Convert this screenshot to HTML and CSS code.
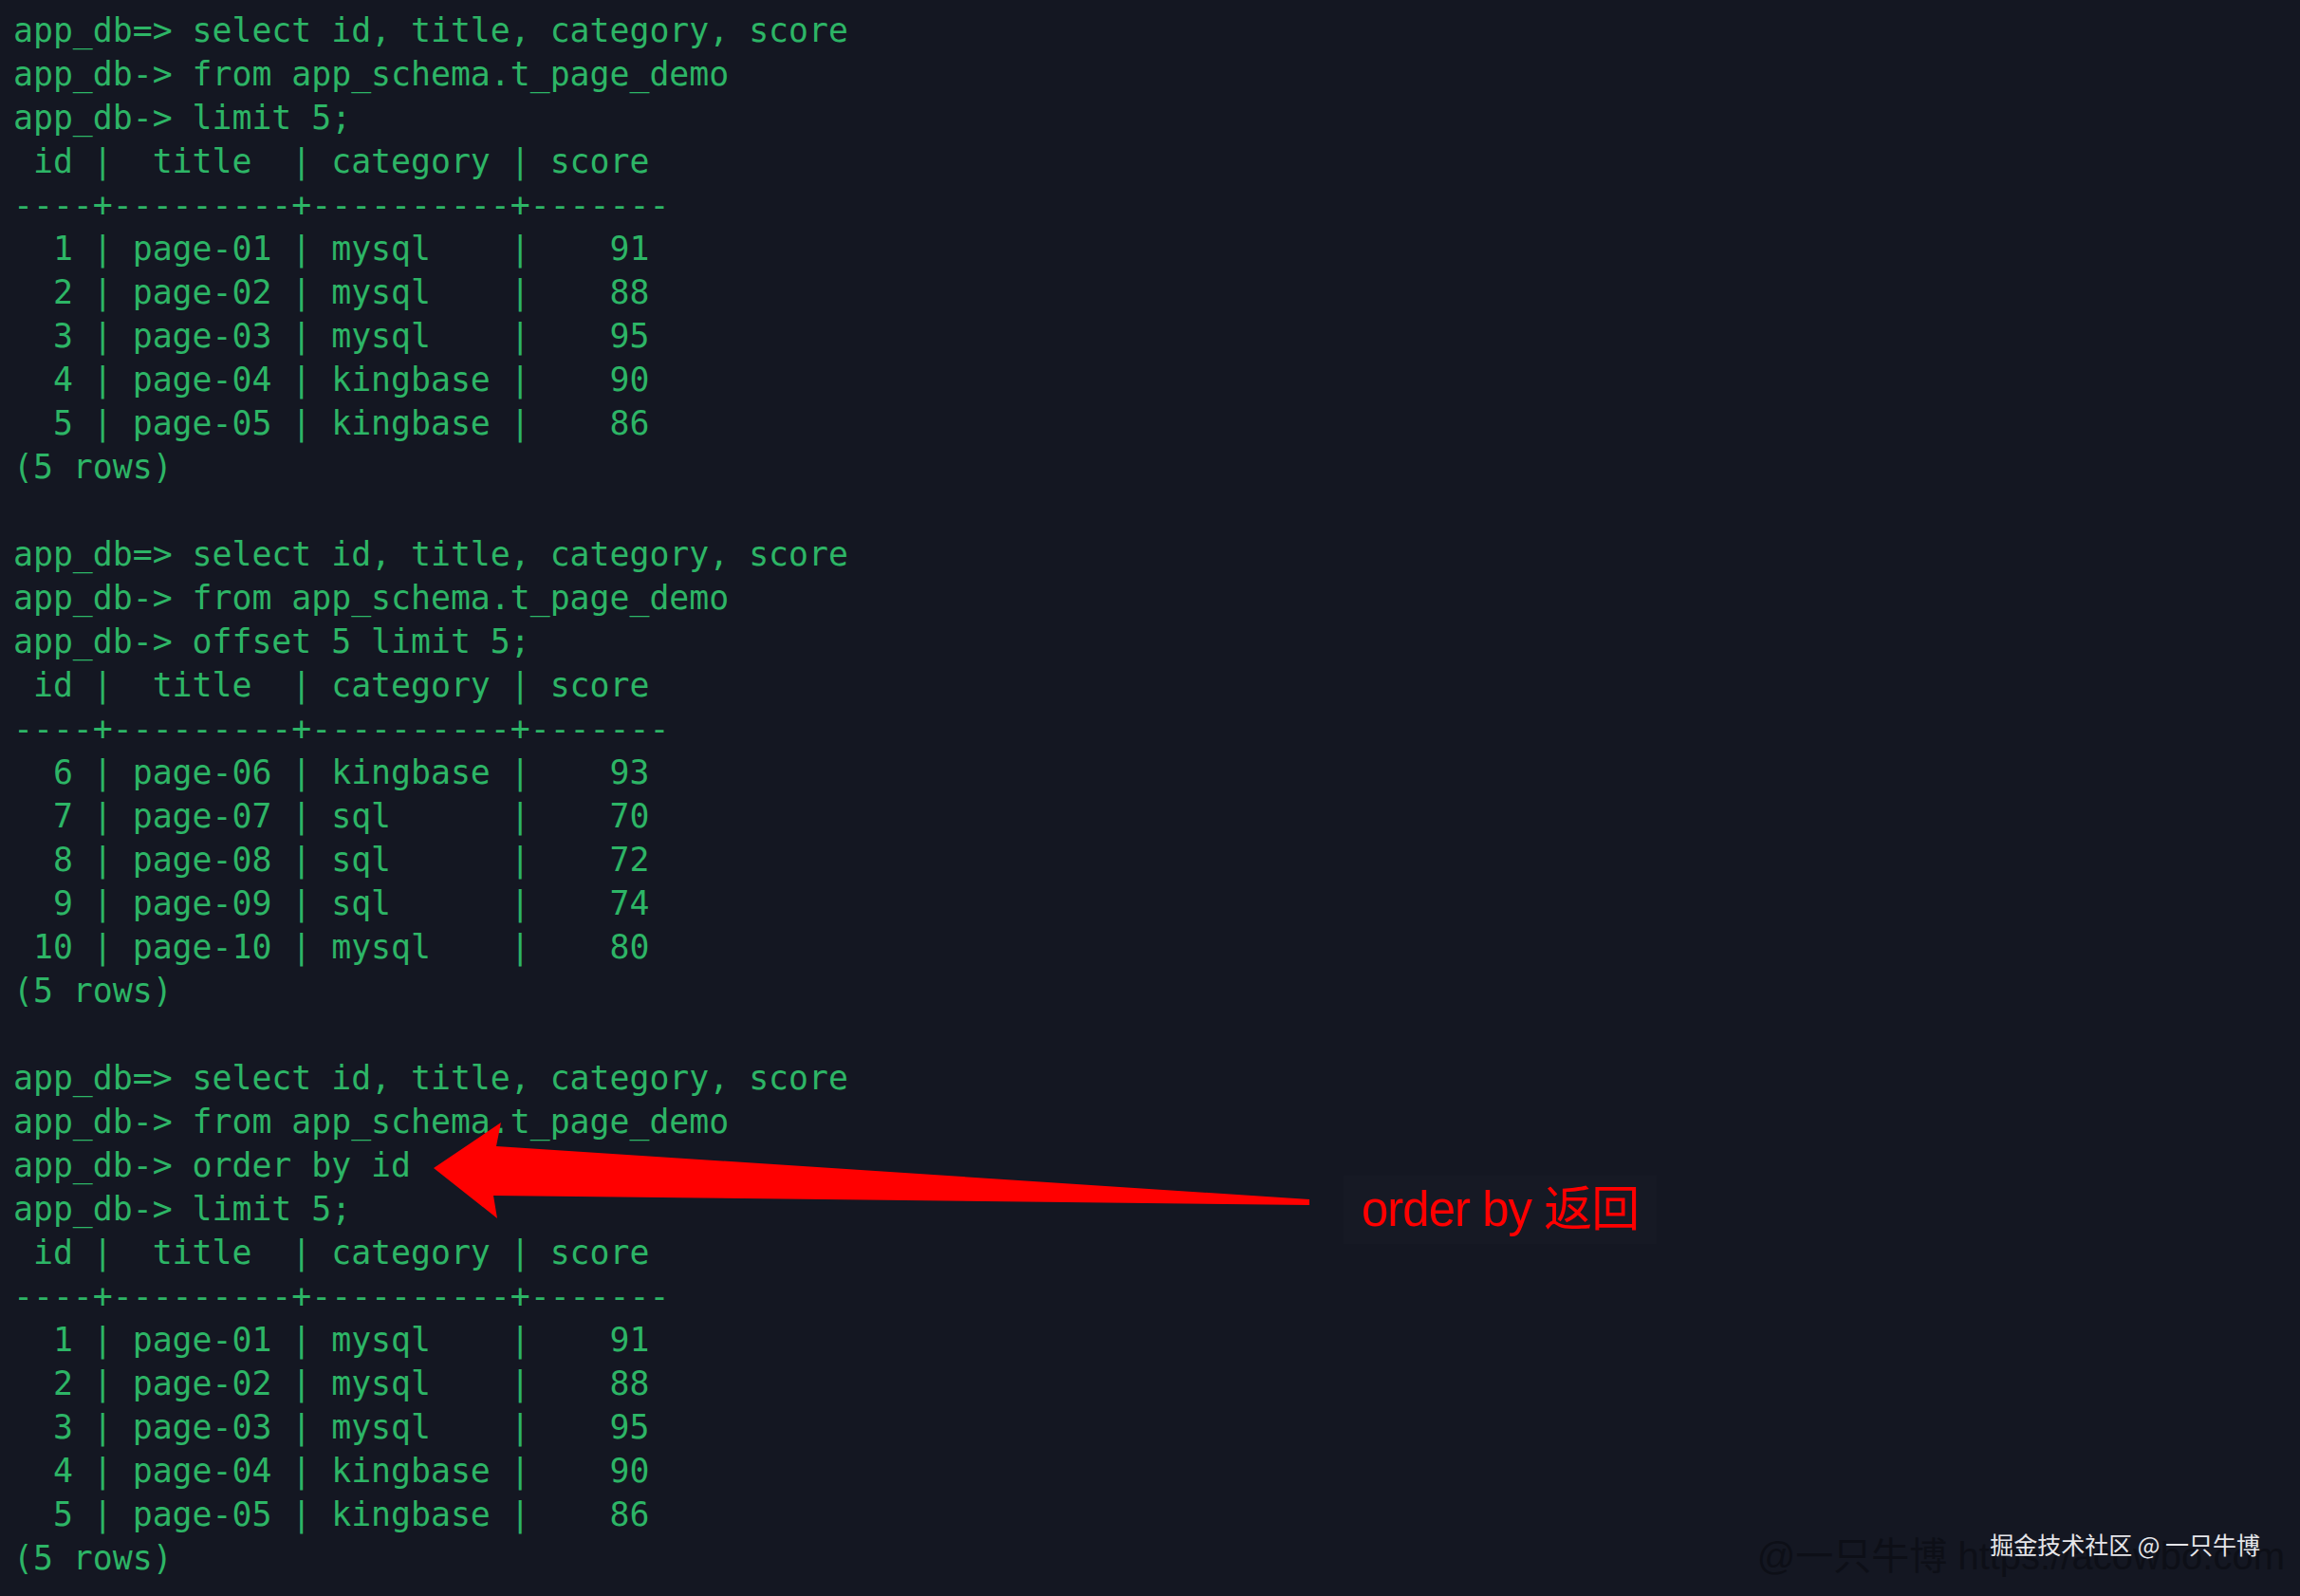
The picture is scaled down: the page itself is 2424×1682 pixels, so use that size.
FILE: index.html
```html
<!DOCTYPE html>
<html lang="zh-CN">
<head>
<meta charset="utf-8">
<title>psql</title>
<link rel="stylesheet" href="styles.css">
</head>
<body>
<main class="screen">
<pre class="term">app_db=&gt; select id, title, category, score
app_db-&gt; from app_schema.t_page_demo
app_db-&gt; limit 5;
 id |  title  | category | score
----+---------+----------+-------
  1 | page-01 | mysql    |    91
  2 | page-02 | mysql    |    88
  3 | page-03 | mysql    |    95
  4 | page-04 | kingbase |    90
  5 | page-05 | kingbase |    86
(5 rows)

app_db=&gt; select id, title, category, score
app_db-&gt; from app_schema.t_page_demo
app_db-&gt; offset 5 limit 5;
 id |  title  | category | score
----+---------+----------+-------
  6 | page-06 | kingbase |    93
  7 | page-07 | sql      |    70
  8 | page-08 | sql      |    72
  9 | page-09 | sql      |    74
 10 | page-10 | mysql    |    80
(5 rows)

app_db=&gt; select id, title, category, score
app_db-&gt; from app_schema.t_page_demo
app_db-&gt; order by id
app_db-&gt; limit 5;
 id |  title  | category | score
----+---------+----------+-------
  1 | page-01 | mysql    |    91
  2 | page-02 | mysql    |    88
  3 | page-03 | mysql    |    95
  4 | page-04 | kingbase |    90
  5 | page-05 | kingbase |    86
(5 rows)</pre>

<svg class="arrow" viewBox="0 0 2424 1682" width="2424" height="1682" aria-hidden="true">
  <polygon points="457,1231 528,1183 523,1208 1380,1264 1380,1270 520,1260 524,1284" fill="#ff0000"/>
</svg>

<div class="note">order by 返回</div>

<div class="wm-dark">@一只牛博 https://acowbo.com</div>
<div class="wm-light">掘金技术社区 @ 一只牛博</div>
</main>
</body>
</html>
```

FILE: styles.css
```css
html, body {
  margin: 0;
  padding: 0;
  background: #141722;
}

.screen {
  position: relative;
  width: 2424px;
  height: 1682px;
  overflow: hidden;
  background: #141722;
}

.term {
  margin: 0;
  padding: 9px 0 0 14px;
  font-family: "DejaVu Sans Mono", "Liberation Mono", monospace;
  font-size: 34.8px;
  line-height: 46px;
  color: #2db566;
  white-space: pre;
}

.arrow {
  position: absolute;
  left: 0;
  top: 0;
  pointer-events: none;
}

.note {
  position: absolute;
  left: 1416px;
  top: 1239px;
  width: 330px;
  height: 72px;
  box-sizing: border-box;
  padding-left: 19px;
  background: #161924;
  color: #ff0000;
  font-family: "Liberation Sans", "Noto Sans CJK SC", sans-serif;
  font-size: 51px;
  letter-spacing: -1px;
  line-height: 72px;
  white-space: nowrap;
}

.wm-dark {
  position: absolute;
  right: 16px;
  top: 1614px;
  font-family: "Liberation Sans", "Noto Sans CJK SC", sans-serif;
  font-size: 40px;
  line-height: 52px;
  color: #0d0f17;
  white-space: nowrap;
}

.wm-light {
  position: absolute;
  right: 42px;
  top: 1610px;
  font-family: "Noto Sans CJK SC", "Liberation Sans", sans-serif;
  font-size: 25px;
  line-height: 34px;
  color: #e6e6ea;
  white-space: nowrap;
}
```
